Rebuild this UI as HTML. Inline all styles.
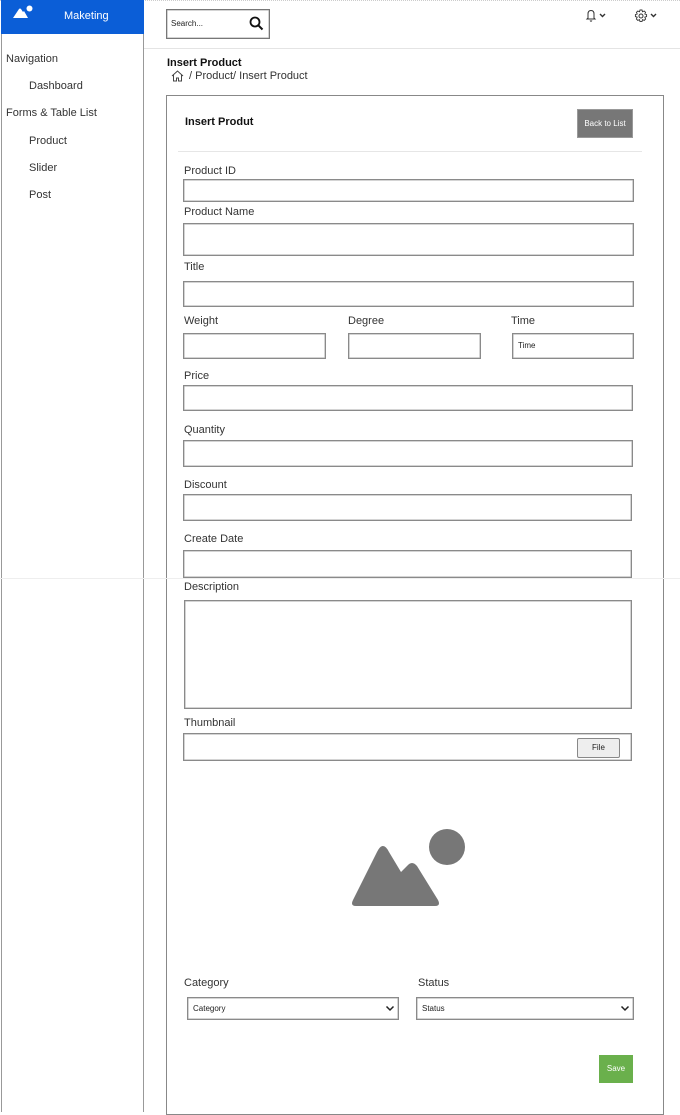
<!DOCTYPE html>
<html><head><meta charset="utf-8"><style>
*{box-sizing:border-box;margin:0;padding:0}
body{width:680px;height:1112px;position:relative;background:#fff;font-family:"Liberation Sans",Arial,sans-serif;color:#222;overflow:hidden}
.a{position:absolute}
.box{position:absolute;border:1px solid #8a8a8a;background:#fff;box-shadow:inset 0 0 0 0.5px #aaa}
.l{position:absolute;font-size:11px;color:#333}
.sm{font-size:8px;color:#222}
</style></head><body>
<div class="a" style="left:0;top:0;width:680px;height:1px;border-top:1px dotted #ccc"></div>
<!-- sidebar -->
<div class="a" style="left:1px;top:0;width:143px;height:1112px;border-left:1px solid #999;border-right:1px solid #999"></div>
<div class="a" style="left:1px;top:0;width:143px;height:34px;background:#0b5ed7"></div>
<svg class="a" style="left:12px;top:5px" width="22" height="14" viewBox="0 0 22 14"><path d="M1 13 L7 4 Q8 3 9 4 L11 7 L12 6 L16 13 Z" fill="#fff"/><circle cx="17.5" cy="3.5" r="3" fill="#fff"/></svg>
<div class="a" style="left:64px;top:10px;font-size:11px;color:#fff">Maketing</div>
<div class="l" style="left:6px;top:53px">Navigation</div>
<div class="l" style="left:29px;top:80px">Dashboard</div>
<div class="l" style="left:6px;top:107px">Forms &amp; Table List</div>
<div class="l" style="left:29px;top:135px">Product</div>
<div class="l" style="left:29px;top:162px">Slider</div>
<div class="l" style="left:29px;top:189px">Post</div>
<!-- topbar -->
<div class="box" style="left:166px;top:9px;width:104px;height:30px;border-color:#777"></div>
<div class="a sm" style="left:171px;top:19px">Search...</div>
<svg class="a" style="left:249px;top:16px" width="15" height="15" viewBox="0 0 15 15"><circle cx="6" cy="6" r="4.5" fill="none" stroke="#111" stroke-width="1.8"/><path d="M9.3 9.3 L13.5 13.5" stroke="#111" stroke-width="2"/></svg>
<svg class="a" style="left:584px;top:9px" width="26" height="14" viewBox="0 0 26 14"><path d="M3 10 L4 9 L4 5 Q4 1.5 7 1.5 Q10 1.5 10 5 L10 9 L11 10 Z M6 11.5 Q7 13 8 11.5" fill="none" stroke="#333" stroke-width="1"/><path d="M16 5 L18.5 7.5 L21 5" fill="none" stroke="#333" stroke-width="1.4"/></svg>
<svg class="a" style="left:634px;top:9px" width="26" height="14" viewBox="0 0 26 14"><circle cx="7" cy="7" r="2" fill="none" stroke="#333" stroke-width="1"/><path d="M6 1 H8 L8.5 2.8 L10.2 2 L11.6 3.4 L10.8 5 L12.6 5.6 V7.6 L10.8 8.2 L11.6 10 L10.2 11.4 L8.5 10.6 L8 12.6 H6 L5.5 10.6 L3.8 11.4 L2.4 10 L3.2 8.2 L1.4 7.6 V5.6 L3.2 5 L2.4 3.4 L3.8 2 L5.5 2.8 Z" fill="none" stroke="#333" stroke-width="0.9"/><path d="M17 5 L19.5 7.5 L22 5" fill="none" stroke="#333" stroke-width="1.4"/></svg>
<div class="a" style="left:144px;top:48px;width:536px;height:1px;background:#e4e4e4"></div>
<div class="a" style="left:167px;top:57px;font-size:11px;font-weight:bold;color:#111">Insert Product</div>
<svg class="a" style="left:171px;top:70px" width="13" height="12" viewBox="0 0 13 12"><path d="M1 6 L6.5 1 L12 6 M2.5 5 V11 H5.5 V8 H7.5 V11 H10.5 V5" fill="none" stroke="#444" stroke-width="1"/></svg>
<div class="a" style="left:189px;top:70px;font-size:11px;color:#333">/ Product/ Insert Product</div>
<!-- card -->
<div class="a" style="left:166px;top:95px;width:498px;height:1020px;border:1px solid #888"></div>
<div class="a" style="left:185px;top:116px;font-size:11px;font-weight:bold;color:#111">Insert Produt</div>
<div class="a" style="left:577px;top:109px;width:56px;height:29px;background:#777;border:1px solid #999;color:#fff;font-size:8px;text-align:center;line-height:27px">Back to List</div>
<div class="a" style="left:178px;top:151px;width:464px;height:1px;background:#e6e6e6"></div>

<div class="l" style="left:184px;top:165px">Product ID</div>
<div class="box" style="left:183px;top:179px;width:451px;height:23px"></div>
<div class="l" style="left:184px;top:206px">Product Name</div>
<div class="box" style="left:183px;top:223px;width:451px;height:33px"></div>
<div class="l" style="left:184px;top:261px">Title</div>
<div class="box" style="left:183px;top:281px;width:451px;height:26px"></div>
<div class="l" style="left:184px;top:315px">Weight</div>
<div class="box" style="left:183px;top:333px;width:143px;height:26px"></div>
<div class="l" style="left:348px;top:315px">Degree</div>
<div class="box" style="left:348px;top:333px;width:133px;height:26px"></div>
<div class="l" style="left:511px;top:315px">Time</div>
<div class="box" style="left:512px;top:333px;width:122px;height:26px"></div>
<div class="a sm" style="left:518px;top:341px">Time</div>
<div class="l" style="left:184px;top:370px">Price</div>
<div class="box" style="left:183px;top:385px;width:450px;height:26px"></div>
<div class="l" style="left:184px;top:424px">Quantity</div>
<div class="box" style="left:183px;top:440px;width:450px;height:27px"></div>
<div class="l" style="left:184px;top:479px">Discount</div>
<div class="box" style="left:183px;top:494px;width:449px;height:27px"></div>
<div class="l" style="left:184px;top:533px">Create Date</div>
<div class="box" style="left:183px;top:550px;width:449px;height:28px"></div>
<div class="a" style="left:0;top:578px;width:680px;height:1px;background:#eee"></div>
<div class="l" style="left:184px;top:581px">Description</div>
<div class="box" style="left:184px;top:600px;width:448px;height:109px"></div>
<div class="l" style="left:184px;top:717px">Thumbnail</div>
<div class="box" style="left:183px;top:733px;width:449px;height:28px"></div>
<div class="a" style="left:577px;top:738px;width:43px;height:20px;background:#eee;border:1px solid #888;border-radius:2px;font-size:8px;text-align:center;line-height:18px">File</div>
<svg class="a" style="left:350px;top:827px" width="120" height="82" viewBox="350 827 120 82"><path d="M356 906 Q350 906 353 900 L377 852 Q383 840 389 852 L401 872 L407 866 Q412 860 417 866 L438 900 Q441 906 435 906 Z" fill="#777"/><circle cx="447" cy="847" r="18" fill="#777"/></svg>
<div class="l" style="left:184px;top:977px">Category</div>
<div class="box" style="left:187px;top:997px;width:212px;height:23px"></div>
<div class="a sm" style="left:193px;top:1004px">Category</div>
<svg class="a" style="left:385px;top:1005px" width="10" height="7" viewBox="0 0 10 7"><path d="M1.5 1.5 L5 5 L8.5 1.5" fill="none" stroke="#222" stroke-width="1.5"/></svg>
<div class="l" style="left:418px;top:977px">Status</div>
<div class="box" style="left:416px;top:997px;width:218px;height:23px"></div>
<div class="a sm" style="left:422px;top:1004px">Status</div>
<svg class="a" style="left:620px;top:1005px" width="10" height="7" viewBox="0 0 10 7"><path d="M1.5 1.5 L5 5 L8.5 1.5" fill="none" stroke="#222" stroke-width="1.5"/></svg>
<div class="a" style="left:599px;top:1055px;width:34px;height:28px;background:#6ab04c;color:#fff;font-size:8px;text-align:center;line-height:28px">Save</div>
</body></html>
